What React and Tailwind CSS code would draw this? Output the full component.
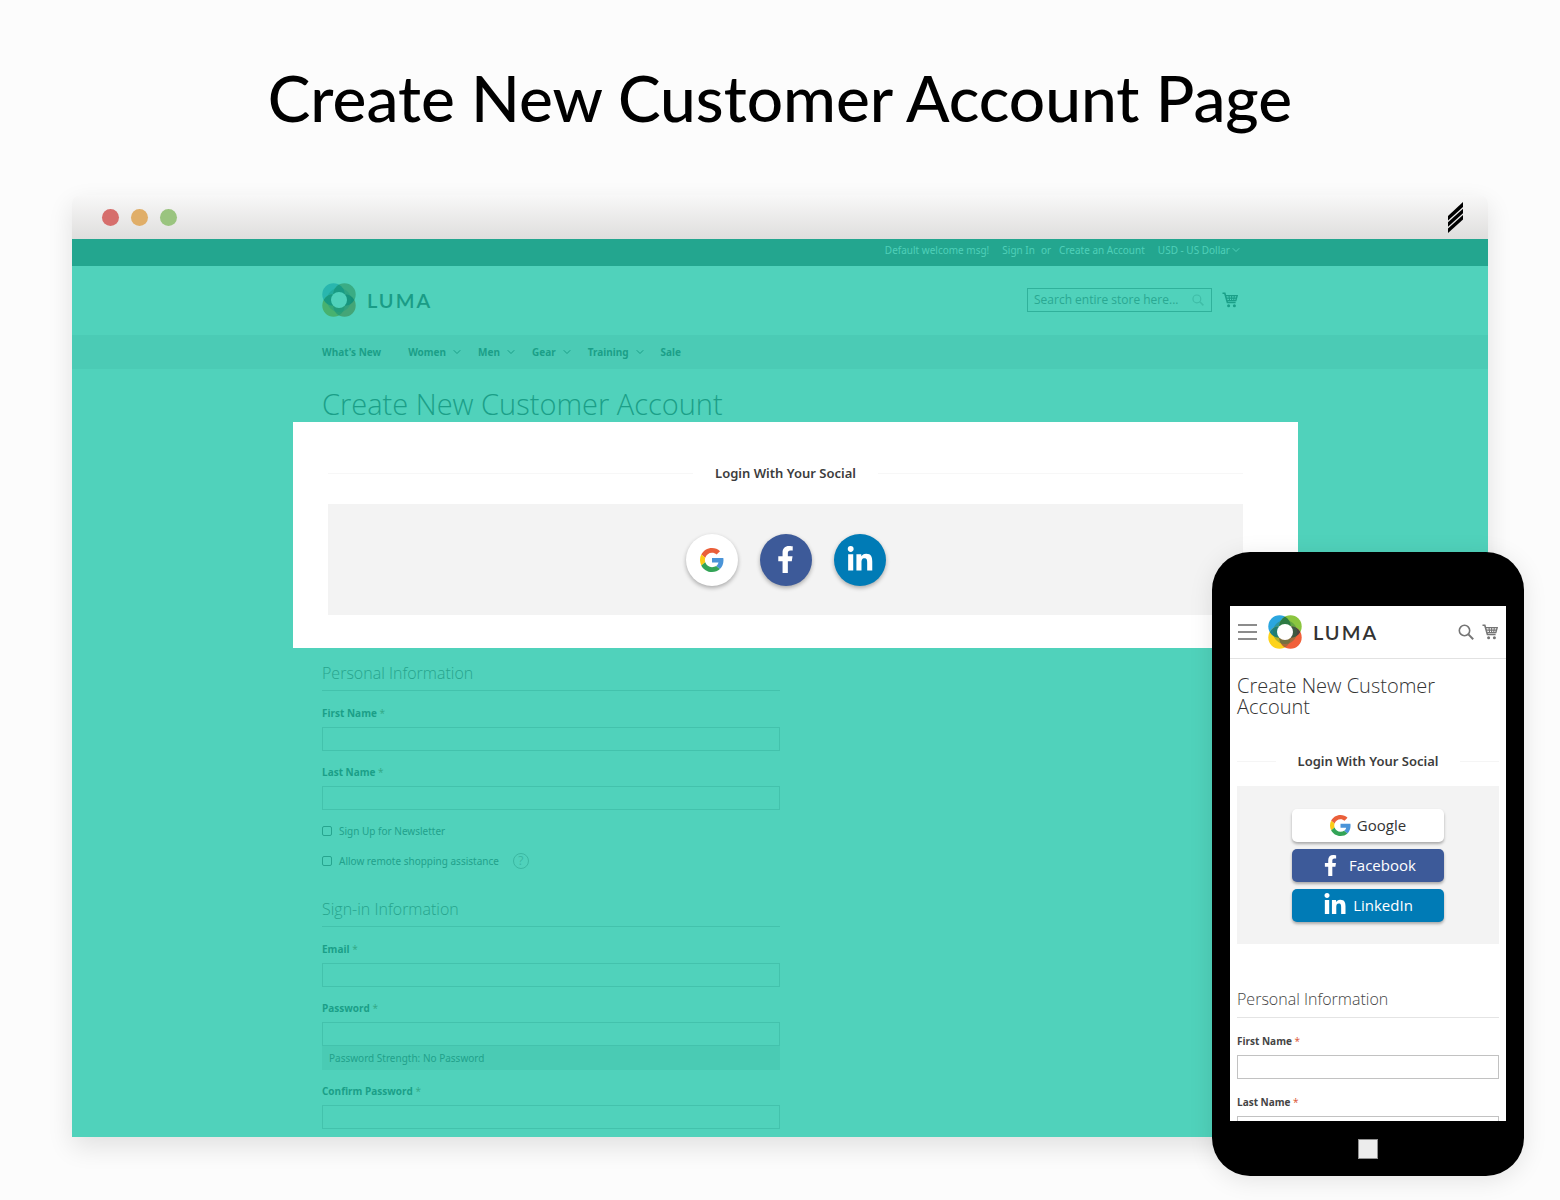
import { useId } from 'react';
import { ChevronDown } from 'lucide-react';
import { FaFacebookF, FaLinkedinIn } from 'react-icons/fa';

const BRIGHT = {
  blue: '#2ba6df',
  green: '#8bc53f',
  yellow: '#fdd31b',
  orange: '#f1603a',
  top: '#2d7a43',
  left: '#1b7f8c',
  right: '#4a4440',
  bottom: '#a66b3c',
  hole: '#ffffff',
  text: 'text-[#333333]',
};

const TINTED = {
  blue: '#29b6ae',
  green: '#3aac84',
  yellow: '#47b26f',
  orange: '#44a577',
  top: '#199c84',
  left: '#189a80',
  right: '#159178',
  bottom: '#2a9f76',
  hole: '#50d2bb',
  text: 'text-[#1a9c86]',
};

const LumaLogo = ({ colors }) => {
  const id = useId();
  return (
    <a href="#" className="flex items-center gap-[11px]" aria-label="Luma">
      <svg viewBox="0 0 34 34" className="size-[34px]" aria-hidden="true">
        <clipPath id={`${id}tl`}><circle cx="11.5" cy="11.5" r="11.2" /></clipPath>
        <clipPath id={`${id}br`}><circle cx="22.5" cy="22.5" r="11.2" /></clipPath>
        <circle cx="11.5" cy="11.5" r="11.2" fill={colors.blue} />
        <circle cx="22.5" cy="11.5" r="11.2" fill={colors.green} />
        <circle cx="11.5" cy="22.5" r="11.2" fill={colors.yellow} />
        <circle cx="22.5" cy="22.5" r="11.2" fill={colors.orange} />
        <circle cx="22.5" cy="11.5" r="11.2" fill={colors.top} clipPath={`url(#${id}tl)`} />
        <circle cx="11.5" cy="22.5" r="11.2" fill={colors.left} clipPath={`url(#${id}tl)`} />
        <circle cx="11.5" cy="22.5" r="11.2" fill={colors.bottom} clipPath={`url(#${id}br)`} />
        <circle cx="22.5" cy="11.5" r="11.2" fill={colors.right} clipPath={`url(#${id}br)`} />
        <circle cx="17" cy="17" r="10" fill="none" stroke={colors.top} strokeWidth="4" opacity="0.4" />
        <circle cx="17" cy="17" r="8" fill={colors.hole} />
      </svg>
      <span className={`font-['Lato',sans-serif] text-xl leading-6 font-semibold tracking-widest ${colors.text}`}>LUMA</span>
    </a>
  );
};

const CartIcon = ({ className }) => (
  <svg viewBox="0 0 16 16" className={className} fill="none" stroke="currentColor" aria-hidden="true">
    <path d="M0.5 1.2h2.3l2.6 9.3h8.2" strokeWidth="1.6" />
    <path d="M3.6 3.6h11.6l-1.4 5H5.2" strokeWidth="1.4" />
    <path d="M4 6.1h10.6M7 3.6l.6 5M9.6 3.6v5M12.3 3.6l-.6 5" strokeWidth="1.1" />
    <circle cx="6.6" cy="13.8" r="1.5" fill="currentColor" stroke="none" />
    <circle cx="12.4" cy="13.8" r="1.5" fill="currentColor" stroke="none" />
  </svg>
);

const SearchIcon = ({ className }) => (
  <svg viewBox="0 0 16 16" className={className} fill="none" stroke="currentColor" aria-hidden="true">
    <circle cx="6.5" cy="6.5" r="5.2" strokeWidth="1.6" />
    <path d="M10.4 10.4l4.8 4.8" strokeWidth="2" />
  </svg>
);

const GoogleIcon = ({ className }) => (
  <svg viewBox="0 0 48 48" className={className} aria-hidden="true">
    <path fill="#ea5f3a" d="M24 9.5c3.54 0 6.71 1.22 9.21 3.6l6.85-6.85C35.9 2.38 30.47 0 24 0 14.62 0 6.51 5.38 2.56 13.22l7.98 6.19C12.43 13.72 17.74 9.5 24 9.5z" />
    <path fill="#4a94d8" d="M46.98 24.55c0-1.57-.15-3.09-.38-4.55H24v9.02h12.94c-.58 2.96-2.26 5.48-4.78 7.18l7.73 6c4.51-4.18 7.09-10.36 7.09-17.65z" />
    <path fill="#fbcb15" d="M10.53 28.59c-.48-1.45-.76-2.99-.76-4.59s.27-3.14.76-4.59l-7.98-6.19C.92 16.46 0 20.12 0 24c0 3.88.92 7.54 2.56 10.78l7.97-6.19z" />
    <path fill="#33a457" d="M24 48c6.48 0 11.93-2.13 15.89-5.81l-7.73-6c-2.15 1.45-4.92 2.3-8.16 2.3-6.26 0-11.57-4.22-13.47-9.91l-7.98 6.19C6.51 42.62 14.62 48 24 48z" />
  </svg>
);

const StripesMark = () => (
  <svg viewBox="0 0 15 31" className="h-[31px] w-[15px]" fill="#000" aria-hidden="true">
    <path d="M0 14L15 0v5L0 18.5z" />
    <path d="M0 20.2L15 6.7v4.5L0 24.7z" />
    <path d="M0 26.4L15 12.9v4.5L0 31z" />
  </svg>
);

const SocialHeading = ({ lineColor, children }) => (
  <div className="flex items-center gap-[22px]">
    <span className={`h-px flex-1 ${lineColor}`} />
    <h2 className="font-['Noto_Sans',sans-serif] text-[13px] leading-5 font-semibold text-[#3c3c3c]">{children}</h2>
    <span className={`h-px flex-1 ${lineColor}`} />
  </div>
);

const DeskField = ({ id, label, type = 'text', children }) => (
  <div className="flex flex-col">
    <label htmlFor={id} className="mb-1.5 text-[10px] leading-4 font-bold text-[#1b9f88]">
      {label} <span className="font-normal text-[#33a886]">*</span>
    </label>
    <input id={id} type={type} className="h-6 w-full border border-[#43c2ac] bg-transparent px-2 text-[10px] outline-none" />
    {children}
  </div>
);

const DeskCheck = ({ id, label, children }) => (
  <div className="flex h-4 items-center">
    <input id={id} type="checkbox" className="size-[10px] appearance-none rounded-[2px] border border-[#27a58f]" />
    <label htmlFor={id} className="ml-[7px] font-['Noto_Sans',sans-serif] text-[10px] leading-4 text-[#22a18b]">{label}</label>
    {children}
  </div>
);

const PhoneField = ({ id, label }) => (
  <div className="flex flex-col">
    <label htmlFor={id} className="mb-1.5 text-[10px] leading-4 font-bold text-[#444444]">
      {label} <span className="font-normal text-[#d9532f]">*</span>
    </label>
    <input id={id} type="text" className="h-6 w-full border border-[#c2c2c2] bg-white px-2 text-[10px] outline-none" />
  </div>
);

const menu = [
  { name: "What's New", open: false },
  { name: 'Women', open: true },
  { name: 'Men', open: true },
  { name: 'Gear', open: true },
  { name: 'Training', open: true },
  { name: 'Sale', open: false },
];

const legendClass = 'mb-[14px] border-b border-[#43c2ac] pb-1 text-base leading-[26px] font-light text-[#27a48d]';
const roundButton = 'flex size-[52px] items-center justify-center rounded-full shadow-[0_2px_4px_rgba(0,0,0,0.3)]';

const Desktop = () => (
  <div className="overflow-hidden rounded-t-lg shadow-[0_10px_26px_rgba(0,0,0,0.11)]">
    <div className="flex h-11 items-center justify-between bg-linear-to-b from-[#f8f8f8] to-[#dfdedd] pr-[25px] pl-[30px]">
      <div className="flex gap-3">
        <span className="size-[17px] rounded-full bg-[#d66e6c]" />
        <span className="size-[17px] rounded-full bg-[#e0ae68]" />
        <span className="size-[17px] rounded-full bg-[#9ac47f]" />
      </div>
      <StripesMark />
    </div>

    <div className="bg-[#50d2bb] text-[#1b9f88]">
      <div className="h-[27px] bg-[#23a68f] pl-1">
        <div className="mx-auto flex h-[22px] max-w-[920px] items-center justify-end font-['Noto_Sans',sans-serif] text-[10px] text-[#4fd0b9]">
          <span>Default welcome msg!</span>
          <a href="#" className="ml-[13px]">Sign In</a>
          <span className="ml-1.5">or</span>
          <a href="#" className="ml-2">Create an Account</a>
          <button type="button" className="ml-[13px] flex items-center">
            USD - US Dollar
            <ChevronDown className="size-3" />
          </button>
        </div>
      </div>

      <header className="h-[69px] pl-1">
        <div className="mx-auto flex h-[67px] max-w-[920px] items-center justify-between pr-1">
          <LumaLogo colors={TINTED} />
          <div className="flex items-center gap-[10px]">
            <div className="flex h-6 w-[185px] items-center border border-[#30b19b] pr-[7px] pl-1.5">
              <input
                type="text"
                aria-label="Search"
                placeholder="Search entire store here..."
                className="min-w-0 flex-1 bg-transparent text-xs outline-none placeholder:text-[#2aa892]"
              />
              <SearchIcon className="size-3 text-[#3fbda7]" />
            </div>
            <CartIcon className="size-4" />
          </div>
        </div>
      </header>

      <nav className="h-[34px] bg-[#4bcbb5] pl-1">
        <div className="mx-auto flex h-full max-w-[920px] items-center font-['Noto_Sans',sans-serif] text-[10px] font-bold">
          {menu.map((item) => (
            <a key={item.name} href="#" className={`flex items-center gap-[5px] ${item.open ? 'mr-[15px]' : 'mr-[27px]'}`}>
              {item.name}
              {item.open && <ChevronDown className="size-3" strokeWidth={2} />}
            </a>
          ))}
        </div>
      </nav>

      <div className="pl-1">
        <h1 className="mx-auto h-[53px] max-w-[920px] pt-[15px] text-[29px] leading-10 font-light text-[#1b9f88]">
          Create New Customer Account
        </h1>
      </div>

      <div className="pl-[31px]">
        <section className="mx-auto h-[226px] max-w-[1005px] bg-white pt-[41px] pr-[55px] pl-[35px]">
          <SocialHeading lineColor="bg-[#f7f7f7]">Login With Your Social</SocialHeading>
          <div className="mt-[21px] flex h-[111px] items-center justify-center gap-[22px] bg-[#f3f3f3]">
            <button type="button" aria-label="Google" className={`${roundButton} bg-white`}>
              <GoogleIcon className="size-6" />
            </button>
            <button type="button" aria-label="Facebook" className={`${roundButton} bg-[#3d5a99] text-white`}>
              <FaFacebookF className="size-[27px]" />
            </button>
            <button type="button" aria-label="LinkedIn" className={`${roundButton} bg-[#007bb6] text-white`}>
              <FaLinkedinIn className="size-7" />
            </button>
          </div>
        </section>
      </div>

      <div className="pl-1">
        <form className="mx-auto max-w-[920px] pt-3 pb-2">
          <fieldset className="max-w-[458px]">
            <h2 className={legendClass}>Personal Information</h2>
            <div className="flex flex-col gap-[13px]">
              <DeskField id="first" label="First Name" />
              <DeskField id="last" label="Last Name" />
              <div className="flex flex-col gap-[14px]">
                <DeskCheck id="news" label="Sign Up for Newsletter" />
                <DeskCheck id="remote" label="Allow remote shopping assistance">
                  <button type="button" aria-label="Help" className="ml-[14px] flex size-4 items-center justify-center rounded-full border border-[#3bb8a2] text-xs leading-none text-[#3bb8a2]">
                    ?
                  </button>
                </DeskCheck>
              </div>
            </div>
          </fieldset>
          <fieldset className="mt-[27px] max-w-[458px]">
            <h2 className={legendClass}>Sign-in Information</h2>
            <div className="flex flex-col gap-[13px]">
              <DeskField id="email" label="Email" type="email" />
              <DeskField id="password" label="Password" type="password">
                <p className="h-6 bg-[#4acbb4] pl-[7px] font-['Noto_Sans',sans-serif] text-[10px] leading-6 text-[#22a18b]">Password Strength: No Password</p>
              </DeskField>
              <DeskField id="confirm" label="Confirm Password" type="password" />
            </div>
          </fieldset>
        </form>
      </div>
    </div>
  </div>
);

const phoneButton = 'flex h-[33px] w-[152px] items-center justify-center rounded-[5px] pb-px text-[15px] leading-5 shadow-[0_2px_3px_rgba(0,0,0,0.3)]';

const Phone = () => (
  <div className="absolute top-[552px] right-9 w-[312px] rounded-[38px] bg-black px-[18px] pt-[54px] shadow-[0_4px_24px_rgba(0,0,0,0.1)]">
    <div className="h-[515px] overflow-hidden bg-white">
      <div className="flex h-[53px] items-center border-b border-[#e2e2e2] px-2">
        <button type="button" aria-label="Menu" className="mr-[11px] flex w-[19px] flex-col gap-[5px]">
          <span className="h-0.5 w-full bg-[#8c8c8c]" />
          <span className="h-0.5 w-full bg-[#8c8c8c]" />
          <span className="h-0.5 w-full bg-[#8c8c8c]" />
        </button>
        <LumaLogo colors={BRIGHT} />
        <div className="ml-auto flex items-center gap-2 text-[#757575]">
          <SearchIcon className="size-4" />
          <CartIcon className="size-4" />
        </div>
      </div>
      <div className="px-[7px] pt-4">
        <h1 className="text-xl leading-[21px] font-light text-[#333333]">Create New Customer Account</h1>
        <div className="mt-[34px]">
          <SocialHeading lineColor="bg-[#f5f5f5]">Login With Your Social</SocialHeading>
        </div>
        <div className="mt-[15px] flex h-[158px] flex-col items-center gap-[7px] bg-[#f3f3f3] pt-[23px]">
          <button type="button" className={`${phoneButton} gap-1.5 bg-white text-[#333333]`}>
            <GoogleIcon className="size-[21px]" />
            Google
          </button>
          <button type="button" className={`${phoneButton} gap-2 bg-[#3d5a99] text-white`}>
            <FaFacebookF className="size-[21px]" />
            Facebook
          </button>
          <button type="button" className={`${phoneButton} gap-1.5 bg-[#007bb6] text-white`}>
            <FaLinkedinIn className="size-6" />
            LinkedIn
          </button>
        </div>
        <div className="mt-[42px] flex flex-col gap-[15px]">
          <h2 className="border-b border-[#e4e4e4] pb-[5px] text-base leading-[26px] font-light text-[#444444]">Personal Information</h2>
          <PhoneField id="phone-first" label="First Name" />
          <PhoneField id="phone-last" label="Last Name" />
        </div>
      </div>
    </div>
    <div className="flex h-[55px] justify-center pt-[18px]">
      <button type="button" aria-label="Home" className="size-5 border border-[#8f8f8f] bg-[#ececec]" />
    </div>
  </div>
);

export default function App() {
  return (
    <div className="relative min-h-screen bg-[#fcfcfc] px-[72px] pb-[63px] font-['Open_Sans',sans-serif]">
      <h1 className="pt-[58px] pb-[57px] text-center font-['Lato',sans-serif] text-[64px] leading-[80px] font-medium text-black">
        Create New Customer Account Page
      </h1>
      <Desktop />
      <Phone />
    </div>
  );
}
